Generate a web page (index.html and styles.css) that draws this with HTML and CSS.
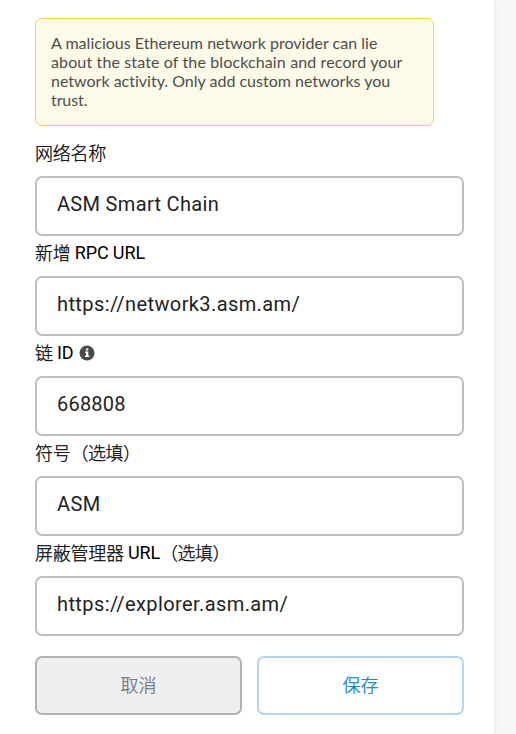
FILE: index.html
```html
<!DOCTYPE html>
<html lang="zh-CN">
<head>
<meta charset="utf-8">
<title>网络</title>
<link rel="stylesheet" href="styles.css">
</head>
<body>
<main class="panel">
  <div class="warning"><span class="w1">A malicious Ethereum network provider can lie</span><br><span class="w2">about the state of the blockchain and record your</span><br><span class="w3">network activity. Only add custom networks you</span><br><span class="w4">trust.</span></div>
  <form class="form">
    <label class="field"><span class="label">网络名称</span><span class="input i1"><span>ASM Smart Chain</span></span></label>
    <label class="field"><span class="label">新增 <span class="latin">RPC URL</span></span><span class="input i2"><span>https://network3.asm.am/</span></span></label>
    <label class="field"><span class="label">链 <span class="latin">ID</span><svg class="info" viewBox="0 0 16 16"><circle cx="8" cy="8" r="7.5" fill="#4a4a4a"/><path d="M7 3.500h2.300v2H7zM6 6.500h3.300v4.300h1V12H6v-1.200h1V7.700H6z" fill="#fff"/></svg></span><span class="input i3"><span>668808</span></span></label>
    <label class="field"><span class="label">符号<span class="paren">（选填）</span></span><span class="input i4"><span>ASM</span></span></label>
    <label class="field"><span class="label">屏蔽管理器 <span class="latin">URL</span><span class="paren">（选填）</span></span><span class="input i5"><span>https://explorer.asm.am/</span></span></label>
    <div class="actions"><button type="button" class="cancel">取消</button><button type="button" class="save">保存</button></div>
  </form>
</main>
</body>
</html>
```

FILE: styles.css
```css
* { box-sizing: border-box; }
body { margin: 0; background: #f7f7f7; font-family: Roboto, "Noto Sans CJK SC", sans-serif; color: #000; }
.panel { width: 494px; height: 734px; padding: 18px 30px 0 35px; background: #fff; box-shadow: 0 0 5px #e8e8e8; overflow: hidden; }
.warning { width: 399px; height: 108px; padding: 14px 15px; border: 1px solid #ffd33d; border-radius: 7px; background: #fefae8; color: #4d4d4d; font: 16px/19px Lato, sans-serif; white-space: nowrap; font-variant-ligatures: none; }
.w1 { letter-spacing: .02px; }
.w2 { letter-spacing: .13px; }
.w3 { letter-spacing: 0; }
.w4 { letter-spacing: -.1px; }
.form { margin-top: 10px; }
.field { display: block; height: 100px; }
.label { display: flex; align-items: center; height: 36px; padding-bottom: 4px; font-size: 18px; font-weight: 300; letter-spacing: -.25px; white-space: pre; margin-bottom: 4px; -webkit-text-stroke: .25px #000; }
.latin { font-weight: 400; letter-spacing: -.1px; -webkit-text-stroke: 0; padding-top: 1px; }
.paren { letter-spacing: -.5px; }
.input { display: flex; align-items: center; width: 429px; height: 60px; padding: 0 20px 4px; border: 2px solid #bbc0c5; border-radius: 7px; font-size: 20px; letter-spacing: .4px; color: #222; }
.i1 { letter-spacing: .32px; }
.i3 { letter-spacing: .2px; }
.info { width: 16px; height: 16px; margin: 1px 0 0 6px; }
.actions { display: flex; gap: 15px; margin-top: 20px; }
.actions button { width: 207px; height: 59px; border-radius: 7px; font: 300 18px "Noto Sans CJK SC", sans-serif; padding: 0 0 3px; -webkit-text-stroke: .25px currentColor; }
.cancel { color: #6a737d; background: #efefef; border: 2px solid #b3b3b3; }
.save { color: #037dd6; background: #fff; border: 2px solid #b0d7f2; }
```
